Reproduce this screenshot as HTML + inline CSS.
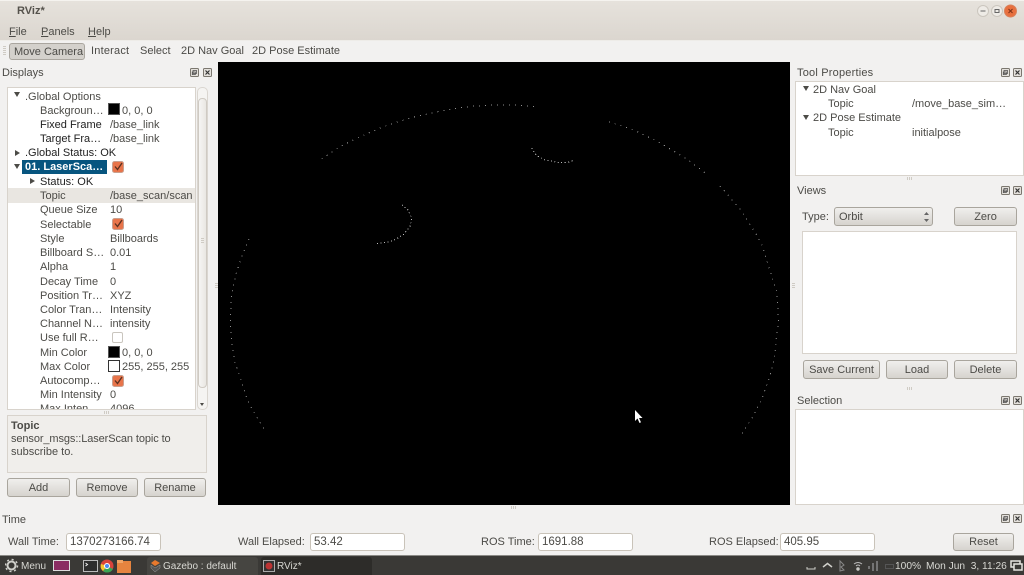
<!DOCTYPE html>
<html><head><meta charset="utf-8"><title>RViz*</title>
<style>
*{box-sizing:border-box}
html,body{margin:0;padding:0}
body{width:1024px;height:575px;overflow:hidden;position:relative;background:#f2f1f0;font:11px/14px "Liberation Sans",sans-serif;color:#4c4b47}
div,span.t{position:absolute}
.t{white-space:nowrap;line-height:14px;margin-top:2px}
.box{background:#fff;border:1px solid #d8d3cc}
.btn{border:1px solid #a9a59d;border-radius:3px;background:linear-gradient(#f0efed,#d6d3ce);text-align:center;line-height:17px;padding-top:1px;color:#4c4b47}
.inp{background:#fff;border:1px solid #c9c3b9;border-radius:3px;padding-left:3px;line-height:17px;font-size:11.5px}
.tri{width:0;height:0;border-left:3px solid transparent;border-right:3px solid transparent;border-top:5px solid #4c4b47}
.trr{width:0;height:0;border-top:3px solid transparent;border-bottom:3px solid transparent;border-left:5px solid #4c4b47}
.sw{width:12px;height:12px;background:#000;border:1px solid #555}
.ic{position:absolute}
.tb{color:#d8d8d3;font-size:10px}
.tr{color:#d8d8d3;font-size:10.2px}
.d{color:#222}
.b{font-weight:bold}
.g{width:5px;height:3px;background:repeating-linear-gradient(90deg,#cfcbc4 0 1px,transparent 1px 2px)}
.gv{width:3px;height:5px;background:repeating-linear-gradient(0deg,#cfcbc4 0 1px,transparent 1px 2px)}
</style></head><body>
<svg width="0" height="0" style="position:absolute">
<symbol id="fl" viewBox="0 0 9 9"><rect x=".5" y=".5" width="8" height="8" rx="1" fill="#e4e1dc" stroke="#7b776f"/><rect x="3" y="2.5" width="3.5" height="3" fill="none" stroke="#555" stroke-width=".8"/><rect x="2.3" y="4" width="3" height="2.6" fill="none" stroke="#555" stroke-width=".8"/></symbol>
<symbol id="cl" viewBox="0 0 9 9"><rect x=".5" y=".5" width="8" height="8" rx="1" fill="#e4e1dc" stroke="#7b776f"/><path d="M2.5 2.5l4 4m0-4l-4 4" stroke="#333" stroke-width="1.2"/></symbol>
<symbol id="ck" viewBox="0 0 12 12"><rect x=".5" y=".5" width="11" height="11" rx="2" fill="#e8744a" stroke="#c9a08f"/><path d="M3 5.5l2.5 3L10 2" fill="none" stroke="#5a3020" stroke-width="1.3"/></symbol>
</svg>
<div style="left:0;top:0;width:1024px;height:41px;background:linear-gradient(#e6e2dc,#dbd6cf);border-top:1px solid #f5f3ef;border-bottom:1px solid #eeece8"></div>
<span class="t b" style="left:17px;top:2px;color:#55524c">RViz*</span>
<svg class="ic" style="left:975px;top:4px" width="48" height="14"><circle cx="8" cy="7" r="5.5" fill="#eeebe6" stroke="#cbc6be"/><path d="M5.5 7h5" stroke="#666" fill="none"/><circle cx="22" cy="7" r="5.5" fill="#eeebe6" stroke="#cbc6be"/><rect x="20" y="5.5" width="4" height="3" fill="none" stroke="#666"/><circle cx="35.5" cy="7" r="6" fill="#e8703f" stroke="#d8805a"/><path d="M33.5 5l4 4m0-4l-4 4" stroke="#7c3218" fill="none"/></svg>
<span class="t" style="left:9px;top:23px"><u>F</u>ile</span>
<span class="t" style="left:41px;top:23px"><u>P</u>anels</span>
<span class="t" style="left:88px;top:23px"><u>H</u>elp</span>

<div style="left:3px;top:46px;width:3px;height:9px;background:repeating-linear-gradient(0deg,#cfcbc4 0 1px,transparent 1px 2px)"></div>
<div style="left:9px;top:43px;width:76px;height:17px;background:#d4d1cc;border:1px solid #aaa69f;border-radius:3px"></div>
<span class="t" style="left:14px;top:43px">Move Camera</span>
<span class="t" style="left:91px;top:42px;letter-spacing:.2px">Interact</span>
<span class="t" style="left:140px;top:42px">Select</span>
<span class="t" style="left:181px;top:42px">2D Nav Goal</span>
<span class="t" style="left:252px;top:42px">2D Pose Estimate</span>

<span class="t" style="left:2px;top:64px">Displays</span>
<svg class="ic" style="left:190px;top:68px" width="9" height="9"><use href="#fl"/></svg><svg class="ic" style="left:203px;top:68px" width="9" height="9"><use href="#cl"/></svg>

<div class="box" style="left:7px;top:87px;width:189px;height:323px;overflow:hidden">
<div style="left:0;top:100px;width:187px;height:15px;background:#e9e6e1"></div>
<div style="left:14px;top:72px;width:85px;height:14px;background:#07557f"></div>
</div>
<div style="left:197px;top:87px;width:11px;height:323px;background:#f5f4f2;border:1px solid #dad6d0;border-radius:5px"></div>
<div style="left:198px;top:98px;width:9px;height:290px;background:linear-gradient(90deg,#f6f5f3,#e9e7e3);border:1px solid #cfcac3;border-radius:4px"></div>
<div class="gv" style="left:201px;top:238px"></div>
<div class="tri" style="left:200px;top:403px;border-left-width:2.5px;border-right-width:2.5px;border-top-width:3px"></div>

<div class="tri" style="left:14px;top:92px"></div>
<div class="trr" style="left:15px;top:150px"></div>
<div class="tri" style="left:14px;top:164px"></div>
<div class="trr" style="left:30px;top:178px"></div>

<span class="t" style="left:25px;top:88px">.Global Options</span>
<span class="t" style="left:40px;top:102px">Backgroun…</span><div class="sw" style="left:108px;top:103px"></div><span class="t" style="left:122px;top:102px">0, 0, 0</span>
<span class="t d" style="left:40px;top:116px">Fixed Frame</span><span class="t" style="left:110px;top:116px">/base_link</span>
<span class="t d" style="left:40px;top:130px">Target Fra…</span><span class="t" style="left:110px;top:130px">/base_link</span>
<span class="t d" style="left:25px;top:144px">.Global Status: OK</span>
<span class="t b" style="left:25px;top:158px;color:#fff">01. LaserSca…</span><svg class="ic" style="left:112px;top:161px" width="12" height="12"><use href="#ck"/></svg>
<span class="t d" style="left:40px;top:173px">Status: OK</span>
<span class="t" style="left:40px;top:187px">Topic</span><span class="t" style="left:110px;top:187px">/base_scan/scan</span>
<span class="t" style="left:40px;top:201px">Queue Size</span><span class="t" style="left:110px;top:201px">10</span>
<span class="t" style="left:40px;top:216px">Selectable</span><svg class="ic" style="left:112px;top:218px" width="12" height="12"><use href="#ck"/></svg>
<span class="t" style="left:40px;top:230px">Style</span><span class="t" style="left:110px;top:230px">Billboards</span>
<span class="t" style="left:40px;top:244px">Billboard S…</span><span class="t" style="left:110px;top:244px">0.01</span>
<span class="t" style="left:40px;top:258px">Alpha</span><span class="t" style="left:110px;top:258px">1</span>
<span class="t" style="left:40px;top:273px">Decay Time</span><span class="t" style="left:110px;top:273px">0</span>
<span class="t" style="left:40px;top:287px">Position Tr…</span><span class="t" style="left:110px;top:287px">XYZ</span>
<span class="t" style="left:40px;top:301px">Color Tran…</span><span class="t" style="left:110px;top:301px">Intensity</span>
<span class="t" style="left:40px;top:315px">Channel N…</span><span class="t" style="left:110px;top:315px">intensity</span>
<span class="t" style="left:40px;top:329px">Use full R…</span><div style="left:112px;top:332px;width:11px;height:11px;background:#fff;border:1px solid #c9c5be;border-radius:2px"></div>
<span class="t" style="left:40px;top:344px">Min Color</span><div class="sw" style="left:108px;top:346px"></div><span class="t" style="left:122px;top:344px">0, 0, 0</span>
<span class="t" style="left:40px;top:358px">Max Color</span><div class="sw" style="left:108px;top:360px;background:#fff;border-color:#333"></div><span class="t" style="left:122px;top:358px">255, 255, 255</span>
<span class="t" style="left:40px;top:372px">Autocomp…</span><svg class="ic" style="left:112px;top:375px" width="12" height="12"><use href="#ck"/></svg>
<span class="t" style="left:40px;top:386px">Min Intensity</span><span class="t" style="left:110px;top:386px">0</span>
<div style="left:8px;top:401px;width:187px;height:8px;overflow:hidden"><span class="t" style="left:32px;top:-1px">Max Inten…</span><span class="t" style="left:102px;top:-1px">4096</span></div>
<div class="g" style="left:104px;top:411px"></div>

<div style="left:7px;top:415px;width:200px;height:58px;background:#f0eeeb;border:1px solid #d8d3cc"></div>
<span class="t b" style="left:11px;top:417px">Topic</span>
<span class="t" style="left:11px;top:430px;letter-spacing:-.1px">sensor_msgs::LaserScan topic to</span>
<span class="t" style="left:11px;top:443px">subscribe to.</span>
<div class="btn" style="left:7px;top:478px;width:63px;height:19px">Add</div>
<div class="btn" style="left:76px;top:478px;width:62px;height:19px">Remove</div>
<div class="btn" style="left:144px;top:478px;width:62px;height:19px">Rename</div>

<div style="left:218px;top:62px;width:572px;height:443px;background:#000"></div>
<svg class="ic" style="left:0;top:0" width="1024" height="575" fill="none" stroke="#8f8f8f" stroke-width="1" stroke-dasharray="1 5" shape-rendering="crispEdges">
<polyline points="321.7,159 340,146.7 356.7,138.3 381.7,127.3 397,122 415,116.7 438,111.7 460,107.7 475,106 495,105 513,105 538,107"/>
<polyline points="609,121.7 624,126.7 635,130.7 656.7,141 673,150.7 686.7,159 706.7,174"/>
<polyline points="720,186 740,209 756.7,235 762,245 775,286.7 777,293 778.5,322.7 776.7,333.6 774.5,359 770,376 761.8,399 752.7,417 745.5,428 742,434"/>
<polyline points="249,239 241.7,256.7 235.7,275 233,288 231,299 230.5,326 232,344.5 235,362.7 240.7,379 247,399 254.5,413.6 265.5,431"/>
<polyline stroke="#bbb" stroke-dasharray="1 2.5" points="402,205 408,210 411.7,218 410,226.7 403,235 393,240.7 383,243 375,243.7"/>
<polyline stroke="#bbb" stroke-dasharray="1 2.5" points="531.7,148 536.7,155.7 545,160 560,162.7 569,162 575,159.7"/>
<path d="M635 410v11l2.5-2.5 2 4.5 1.5-.7-2-4.3h3.5z" fill="#fff" stroke="none" stroke-dasharray="none" shape-rendering="auto"/>
</svg>

<span class="t" style="left:797px;top:64px;letter-spacing:.2px">Tool Properties</span>
<svg class="ic" style="left:1001px;top:68px" width="9" height="9"><use href="#fl"/></svg><svg class="ic" style="left:1013px;top:68px" width="9" height="9"><use href="#cl"/></svg>
<div class="box" style="left:795px;top:81px;width:229px;height:95px"></div>
<div class="tri" style="left:803px;top:86px"></div><div class="tri" style="left:803px;top:115px"></div>
<span class="t" style="left:813px;top:81px">2D Nav Goal</span>
<span class="t" style="left:828px;top:95px">Topic</span><span class="t" style="left:912px;top:95px">/move_base_sim…</span>
<span class="t" style="left:813px;top:109px">2D Pose Estimate</span>
<span class="t" style="left:828px;top:124px">Topic</span><span class="t" style="left:912px;top:124px">initialpose</span>
<div class="g" style="left:907px;top:177px"></div>

<span class="t" style="left:797px;top:182px">Views</span>
<svg class="ic" style="left:1001px;top:186px" width="9" height="9"><use href="#fl"/></svg><svg class="ic" style="left:1013px;top:186px" width="9" height="9"><use href="#cl"/></svg>
<span class="t" style="left:802px;top:208px">Type:</span>
<div class="btn" style="left:834px;top:207px;width:99px;height:19px;text-align:left;padding-left:4px">Orbit</div>
<svg class="ic" style="left:924px;top:211px" width="6" height="12"><path d="M0 4l2.5-3 2.5 3zM0 8l2.5 3 2.5-3z" fill="#666"/></svg>
<div class="btn" style="left:954px;top:207px;width:63px;height:19px">Zero</div>
<div class="box" style="left:802px;top:231px;width:215px;height:123px"></div>
<div class="btn" style="left:803px;top:360px;width:77px;height:19px">Save Current</div>
<div class="btn" style="left:886px;top:360px;width:62px;height:19px">Load</div>
<div class="btn" style="left:954px;top:360px;width:63px;height:19px">Delete</div>
<div class="g" style="left:907px;top:387px"></div>

<span class="t" style="left:797px;top:392px">Selection</span>
<svg class="ic" style="left:1001px;top:396px" width="9" height="9"><use href="#fl"/></svg><svg class="ic" style="left:1013px;top:396px" width="9" height="9"><use href="#cl"/></svg>
<div class="box" style="left:795px;top:409px;width:229px;height:96px"></div>
<div class="gv" style="left:215px;top:283px"></div><div class="gv" style="left:792px;top:283px"></div>
<div class="g" style="left:511px;top:506px"></div>

<span class="t" style="left:2px;top:511px">Time</span>
<svg class="ic" style="left:1001px;top:514px" width="9" height="9"><use href="#fl"/></svg><svg class="ic" style="left:1013px;top:514px" width="9" height="9"><use href="#cl"/></svg>
<span class="t" style="left:8px;top:533px">Wall Time:</span><div class="inp" style="left:66px;top:533px;width:95px;height:18px">1370273166.74</div>
<span class="t" style="left:238px;top:533px">Wall Elapsed:</span><div class="inp" style="left:310px;top:533px;width:95px;height:18px">53.42</div>
<span class="t" style="left:481px;top:533px">ROS Time:</span><div class="inp" style="left:538px;top:533px;width:95px;height:18px">1691.88</div>
<span class="t" style="left:709px;top:533px">ROS Elapsed:</span><div class="inp" style="left:780px;top:533px;width:95px;height:18px">405.95</div>
<div class="btn" style="left:953px;top:533px;width:61px;height:18px;padding-top:0">Reset</div>

<div style="left:0;top:555px;width:1024px;height:20px;background:#3a3936;border-top:1px solid #8b8a86"></div>
<svg class="ic" style="left:5px;top:558px" width="140" height="16"><circle cx="6.5" cy="7.5" r="4" fill="none" stroke="#cfcfca" stroke-width="2"/><circle cx="6.5" cy="7.5" r="6" fill="none" stroke="#cfcfca" stroke-width="1.5" stroke-dasharray="2 2.7"/><rect x="48.5" y="2.5" width="16" height="10" fill="#8a2c62" stroke="#ddd"/></svg>
<span class="t tb" style="left:21px;top:558px">Menu</span>
<svg class="ic" style="left:82px;top:557px" width="52" height="17"><rect x="1.5" y="3.5" width="14" height="11" fill="#2d2d2d" stroke="#bbb"/><path d="M3.5 6l2 1.5L3.5 9" stroke="#eee" fill="none"/><circle cx="25" cy="9" r="6.5" fill="#d9433a"/><path d="M25 9L31 12A6.5 6.5 0 0 1 21 14z" fill="#3aa655"/><path d="M25 9L21 14A6.5 6.5 0 0 1 19 7z" fill="#f3c331"/><circle cx="25" cy="9" r="2.5" fill="#4b8bf0" stroke="#fff"/><rect x="35" y="4" width="14" height="12" fill="#e6843f"/><rect x="35" y="3" width="6" height="3" fill="#f0a566"/></svg>
<div style="left:147px;top:557px;width:111px;height:18px;background:#464541;border-radius:3px 3px 0 0"></div>
<div style="left:261px;top:557px;width:111px;height:18px;background:#2d2c29;border-radius:3px 3px 0 0"></div>
<svg class="ic" style="left:150px;top:559px" width="12" height="14"><path d="M5 1l5 3-5 3-4-3z" fill="#e8792d"/><path d="M1 6l4 3 5-3v3l-5 4-4-4z" fill="#555" stroke="#999" stroke-width=".5"/></svg>
<span class="t tb" style="left:163px;top:558px">Gazebo : default</span>
<svg class="ic" style="left:263px;top:560px" width="13" height="12"><rect x=".5" y=".5" width="11" height="11" fill="#333" stroke="#aaa"/><circle cx="6" cy="6" r="3.5" fill="#b33"/></svg>
<span class="t tb" style="left:277px;top:558px">RViz*</span>
<svg class="ic" style="left:805px;top:558px" width="90" height="16" fill="none" stroke="#cfcfca"><path d="M2 9v2h8V9"/><path d="M18 9l4.5-3.5L27 9" stroke-width="1.5"/><path d="M35 3l4 4-3 2 3 3-4 1z" stroke="#888"/><path d="M49 6q4-3 8 0M51 8q2-2 4 0" stroke="#bbb"/><circle cx="53" cy="11" r="1.2" fill="#bbb"/><path d="M68 5v8M72 3v10M64 8v3" stroke="#888" stroke-width="1.5"/><rect x="80.5" y="6.5" width="8" height="4" stroke="#555"/></svg>
<span class="t tr" style="left:895px;top:558px">100%</span>
<span class="t tr" style="left:926px;top:558px">Mon Jun&nbsp; 3, 11:26</span>
<svg class="ic" style="left:1010px;top:560px" width="13" height="12" fill="none" stroke="#e6e6e1" stroke-width="1.5"><rect x="1" y="1" width="9" height="6"/><rect x="4" y="4" width="8" height="6" fill="#3a3936"/></svg>
</body></html>
